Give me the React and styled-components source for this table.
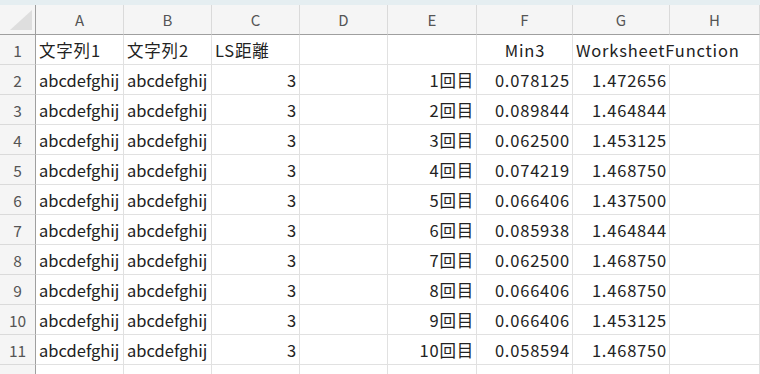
import React from 'react';
import styled, { createGlobalStyle } from 'styled-components';

const GlobalStyle = createGlobalStyle`
html, body {
  margin: 0;
  background: #ffffff;
  font-family: "Noto Sans CJK JP", "Noto Sans", sans-serif;
  overflow: hidden;
}
`

const cols = [36, 88, 88, 88, 88, 89, 96, 97, 90]

const TopBand = styled.div`
height: 5px;
background: #e5eef1;
`
const Sheet = styled.div`
display: grid;
grid-template-columns: ${cols.map(c => c + 'px').join(' ')};
grid-auto-rows: 30px;
width: 760px;
height: 369px;
overflow: hidden;
`
const HeadCell = styled.div`
background: #f5f5f5;
border-right: 1px solid #dadada;
border-bottom: 1px solid #9f9f9f;
color: #555555;
font-size: 15px;
display: flex;
align-items: center;
justify-content: center;
box-sizing: border-box;
`
const Corner = styled(HeadCell)`
position: relative;
border-right: 1px solid #9f9f9f;
`
const Triangle = styled.div`
position: absolute;
right: 3px;
bottom: 4px;
width: 0;
height: 0;
border-left: 22px solid transparent;
border-bottom: 20px solid #dedede;
`
const RowNum = styled.div`
background: #f5f5f5;
border-right: 1px solid #9f9f9f;
border-bottom: 1px solid #dadada;
color: #555555;
font-size: 15.5px;
display: flex;
align-items: center;
justify-content: center;
box-sizing: border-box;
`
const Cell = styled.div`
border-right: 1px solid ${p => p.$noRight ? '#ffffff' : '#e1e1e1'};
border-bottom: 1px solid #e1e1e1;
color: #222222;
font-size: 16.5px;
letter-spacing: ${p => p.$wide ? '0.8px' : '0'};
display: flex;
align-items: center;
justify-content: ${p => p.$align === 'right' ? 'flex-end' : p.$align === 'center' ? 'center' : 'flex-start'};
padding: 0 ${p => p.$wide ? '2px' : '3px'} 0 3px;
box-sizing: border-box;
white-space: nowrap;
overflow: ${p => p.$spill ? 'visible' : 'hidden'};
position: relative;
z-index: ${p => p.$spill ? 1 : 0};
`

const letters = ['A', 'B', 'C', 'D', 'E', 'F', 'G', 'H']

const minVals = ['0.078125', '0.089844', '0.062500', '0.074219', '0.066406', '0.085938', '0.062500', '0.066406', '0.066406', '0.058594']
const wsVals = ['1.472656', '1.464844', '1.453125', '1.468750', '1.437500', '1.464844', '1.468750', '1.468750', '1.453125', '1.468750']

const App = () => {
    return (
        <>
        <GlobalStyle />
        <TopBand />
        <Sheet>
            <Corner><Triangle /></Corner>
            {letters.map(l => <HeadCell key={l}>{l}</HeadCell>)}

            <RowNum>1</RowNum>
            <Cell $wide>文字列1</Cell>
            <Cell $wide>文字列2</Cell>
            <Cell $wide>LS距離</Cell>
            <Cell />
            <Cell />
            <Cell $align="center" $wide>Min3</Cell>
            <Cell $spill $noRight $wide>WorksheetFunction</Cell>
            <Cell />

            {minVals.map((m, i) => (
                <React.Fragment key={i}>
                    <RowNum>{i + 2}</RowNum>
                    <Cell>abcdefghij</Cell>
                    <Cell>abcdefghij</Cell>
                    <Cell $align="right" $wide>3</Cell>
                    <Cell />
                    <Cell $align="right" $wide>{i + 1}回目</Cell>
                    <Cell $align="right" $wide>{m}</Cell>
                    <Cell $align="right" $wide>{wsVals[i]}</Cell>
                    <Cell />
                </React.Fragment>
            ))}

            <RowNum />
            {letters.map(l => <Cell key={'e' + l} />)}
        </Sheet>
        </>
    );
};

export default App;
